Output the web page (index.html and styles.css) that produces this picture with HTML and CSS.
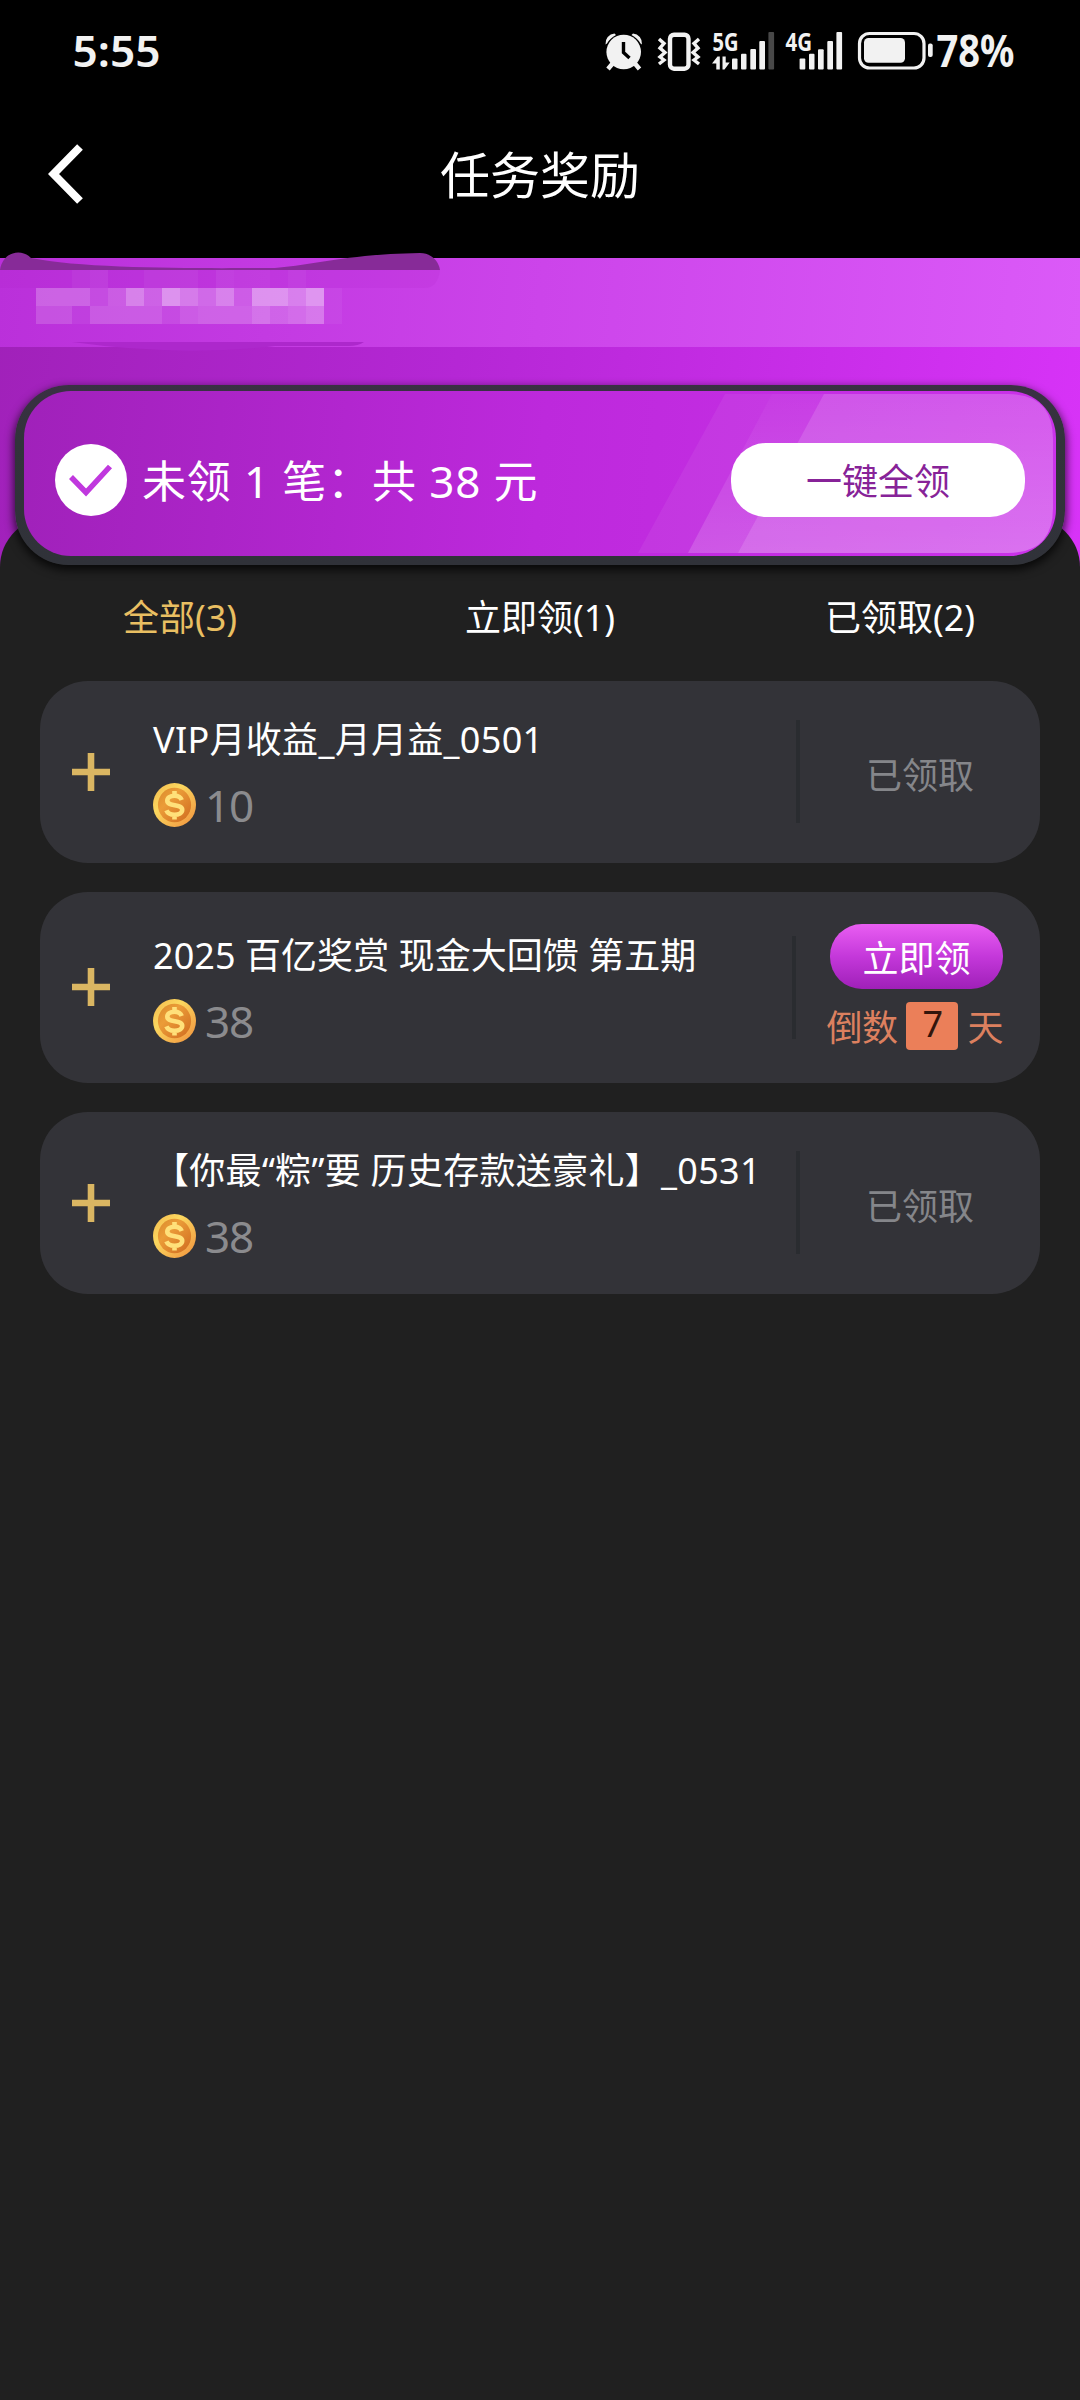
FILE: index.html
```html
<!DOCTYPE html>
<html lang="zh-CN">
<head>
<meta charset="utf-8">
<title>任务奖励</title>
<link rel="stylesheet" href="styles.css">
</head>
<body>
<svg class="defs" width="0" height="0" aria-hidden="true">
  <defs>
    <linearGradient id="rim" x1="0" y1="0" x2="1" y2="1"><stop offset="0" stop-color="#f3b64c"/><stop offset=".35" stop-color="#fbd85f"/><stop offset="1" stop-color="#f08f3c"/></linearGradient>
    <linearGradient id="face" x1="0" y1="0" x2="1" y2="1"><stop offset="0" stop-color="#d98a2b"/><stop offset=".35" stop-color="#eb9c38"/><stop offset="1" stop-color="#cf6a1f"/></linearGradient>
    <symbol id="coin" viewBox="0 0 43 44">
      <ellipse cx="21.5" cy="22" rx="21.5" ry="22" fill="url(#rim)"/>
      <ellipse cx="21.5" cy="22" rx="16.6" ry="17.2" fill="url(#face)"/>
      <path d="M21.5 8v5M21.5 31.500v5M28.700 17c-1-2.700-4-4.200-7.200-4.200-4.200 0-7.200 1.900-7.200 4.900 0 6.300 14.900 2.800 14.900 9.100 0 3.200-3.500 5-7.700 5-3.700 0-6.900-1.500-8.100-4.400" fill="none" stroke="#ffe07a" stroke-width="4.600"/>
    </symbol>
    <symbol id="plus" viewBox="0 0 38 38"><path d="M19 0v38M0 19h38" stroke="#dab662" stroke-width="6.600"/></symbol>
  </defs>
</svg>
<div class="screen">
  <header class="top">
    <div class="status">
      <svg width="1080" height="100" viewBox="0 0 1080 100">
        <g fill="#f2f2f2">
          <text class="sys" x="72.500" y="67" font-size="44" textLength="88" lengthAdjust="spacingAndGlyphs">5:55</text>
          <path d="M605.500 44.500a10 10 0 0 1 9-11l1.500 1.500q-6 3-9 8.500zM642 44.500a10 10 0 0 0-9-11l-1.500 1.500q6 3 9 8.500z"/>
          <circle cx="623.700" cy="52" r="17.300"/>
          <path d="M613 63l-5 6M634.500 63l5 6" stroke="#f2f2f2" stroke-width="4.500"/>
          <path d="M623.500 42v10.500l6 5.500" fill="none" stroke="#000" stroke-width="3.400"/>
          <rect x="670" y="34.700" width="18.500" height="34" rx="4" fill="none" stroke="#f2f2f2" stroke-width="4.400"/>
          <path d="M659 39l5 4.500-4 4.500 5 4.500-5 4.500 4 3-5 4M699 39l-5 4.500 4 4.500-5 4.500 5 4.500-4 3 5 4" fill="none" stroke="#f2f2f2" stroke-width="3.400"/>
          <text class="sys net" x="712.500" y="50.500" font-size="25" textLength="26" lengthAdjust="spacingAndGlyphs">5G</text>
          <path d="M712 63.500l5.500-7h2.300v13h-3.500v-6zM722.500 56.500h3.200v6h4l-5.200 7h-2z"/>
          <rect x="732" y="58.500" width="5.500" height="11" rx="1"/><rect x="741" y="53.700" width="5.500" height="15.800" rx="1"/><rect x="750.300" y="49" width="5.700" height="20.500" rx="1"/><rect x="759.300" y="41" width="5.700" height="28.500" rx="1"/><rect x="768.400" y="32" width="5.700" height="37.500" rx="1" fill="#484848"/>
          <text class="sys net" x="785.500" y="50.500" font-size="25" textLength="26.500" lengthAdjust="spacingAndGlyphs">4G</text>
          <rect x="799.600" y="58.500" width="5.700" height="11" rx="1"/><rect x="809" y="53.700" width="5.500" height="15.800" rx="1"/><rect x="818" y="49.300" width="5.700" height="20.200" rx="1"/><rect x="827.300" y="41" width="5.700" height="28.500" rx="1"/><rect x="836.400" y="32" width="5.700" height="37.500" rx="1"/>
          <rect x="859.500" y="33.500" width="64.500" height="34.500" rx="10" fill="none" stroke="#f2f2f2" stroke-width="3.200"/>
          <rect x="864" y="38" width="41" height="24.800" rx="4.500"/>
          <rect x="928" y="43.500" width="4.700" height="13.500" rx="2"/>
          <text class="sys net" x="936.500" y="67" font-size="44" textLength="78" lengthAdjust="spacingAndGlyphs">78%</text>
        </g>
      </svg>
    </div>
    <div class="nav">
      <svg class="back" width="36" height="60" viewBox="0 0 36 60"><path d="M32 3L5.500 30 32 57" fill="none" stroke="#fff" stroke-width="8"/></svg>
      <h1 class="title">任务奖励</h1>
    </div>
  </header>

  <section class="hero">
    <div class="ticker">
      <svg class="scribble" width="460" height="104" viewBox="0 250 460 104">
        <path d="M0 270C3 251 22 248 31 258C90 270 220 268 275 268C320 264 350 254 420 253C432 253 439 262 440 270z" fill="#872b98"/>
        <path d="M72 342H364Q358 346.500 346 346H275Q180 357 72 342z" fill="#ad28cc"/>
        <path d="M0 270H440Q438 288 424 288H0z" fill="#b020cc" opacity=".15"/>
        <g fill="#fff">
          <path d="M72 270h18v18H72zM144 270h54v18h-54zM234 270h36v18h-36zM288 270h18v18h-18z" opacity=".04"/>
          <path d="M90 270h18v18H90zM216 270h18v18h-18z" opacity=".06"/>
          <path d="M36 288h54v18H36z" opacity=".24"/><path d="M90 288h18v18H90z" opacity=".12"/><path d="M108 288h18v18h-18z" opacity=".2"/><path d="M126 288h18v18h-18z" opacity=".38"/><path d="M144 288h18v18h-18z" opacity=".22"/><path d="M162 288h18v18h-18z" opacity=".46"/><path d="M180 288h18v18h-18z" opacity=".34"/><path d="M198 288h18v18h-18z" opacity=".25"/><path d="M216 288h18v18h-18z" opacity=".37"/><path d="M234 288h18v18h-18z" opacity=".18"/><path d="M252 288h36v18h-36z" opacity=".45"/><path d="M288 288h18v18h-18z" opacity=".35"/><path d="M306 288h18v18h-18z" opacity=".46"/><path d="M324 288h18v36h-18z" opacity=".05"/>
          <path d="M36 306h36v18H36z" opacity=".16"/><path d="M72 306h18v18H72z" opacity=".06"/><path d="M90 306h72v18H90z" opacity=".19"/><path d="M162 306h18v18h-18z" opacity=".1"/><path d="M180 306h18v18h-18z" opacity=".18"/><path d="M198 306h54v18h-54z" opacity=".21"/><path d="M252 306h18v18h-18z" opacity=".29"/><path d="M270 306h18v18h-18z" opacity=".21"/><path d="M288 306h18v18h-18z" opacity=".25"/><path d="M306 306h18v18h-18z" opacity=".31"/>
        </g>
      </svg>
    </div>
    <div class="banner">
      <div class="banner-in">
        <svg class="rays" width="1032" height="165" viewBox="0 0 1032 165" fill="#fff">
          <path d="M701 3H984Q1029 3 1029 48V117Q1029 162 984 162H614z" opacity=".06"/>
          <path d="M748 3H984Q1029 3 1029 48V117Q1029 162 984 162H664z" fill="url(#r2)"/>
          <path d="M800 3H984Q1029 3 1029 48V117Q1029 162 984 162H714z" opacity=".13"/>
          <defs><linearGradient id="r2" x1="0" y1="0" x2="0" y2="1"><stop offset="0" stop-color="#fff" stop-opacity=".02"/><stop offset="1" stop-color="#fff" stop-opacity=".16"/></linearGradient></defs>
        </svg>
        <svg class="check" width="72" height="72" viewBox="0 0 72 72"><circle cx="36" cy="36" r="36" fill="#fff"/><path d="M16 33l15 15.500 24-26" fill="none" stroke="#c038de" stroke-width="5.500"/></svg>
        <span class="summary">未领 1 笔：共 38 元</span>
        <button class="claim-all">一键全领</button>
      </div>
    </div>
  </section>

  <main class="panel">
    <nav class="tabs">
      <span class="tab tab-on">全部(3)</span>
      <span class="tab">立即领(1)</span>
      <span class="tab">已领取(2)</span>
    </nav>
    <div class="list">
      <article class="card">
        <svg class="plus"><use href="#plus"/></svg>
        <div class="info">
          <div class="name">VIP月收益_月月益_0501</div>
          <div class="amount"><svg class="coin"><use href="#coin"/></svg>10</div>
        </div>
        <div class="rule"></div>
        <div class="state">已领取</div>
      </article>
      <article class="card card-open">
        <svg class="plus"><use href="#plus"/></svg>
        <div class="info">
          <div class="name">2025 百亿奖赏 现金大回馈 第五期</div>
          <div class="amount"><svg class="coin"><use href="#coin"/></svg>38</div>
        </div>
        <div class="rule"></div>
        <div class="state">
          <button class="claim">立即领</button>
          <div class="count"><span>倒数</span><b class="days">7</b><span>天</span></div>
        </div>
      </article>
      <article class="card">
        <svg class="plus"><use href="#plus"/></svg>
        <div class="info">
          <div class="name">【你最“粽”要 历史存款送豪礼】_0531</div>
          <div class="amount"><svg class="coin"><use href="#coin"/></svg>38</div>
        </div>
        <div class="rule"></div>
        <div class="state">已领取</div>
      </article>
    </div>
  </main>
</div>
</body>
</html>
```
FILE: styles.css
```css
* { box-sizing: border-box; }
body {
  margin: 0;
  background: #202020;
  color: #fff;
  font-family: "Noto Sans", "Noto Sans CJK SC", sans-serif;
  font-size: 36px;
}
.defs { display: block; position: absolute; }
svg { display: block; flex: none; }
button { border: 0; padding: 0; font: inherit; }
.screen { width: 1080px; height: 2400px; display: flex; flex-direction: column; overflow: hidden; }

.top { height: 258px; background: #000; flex: none; }
.status { height: 100px; }
.sys { font-family: "Noto Sans", sans-serif; font-weight: 600; }
.net { font-weight: 700; }
.nav {
  height: 147px;
  padding: 0 48px;
  display: grid;
  grid-template-columns: 36px 1fr 36px;
  align-items: center;
}
.title { margin: 0; text-align: center; font-size: 50px; font-weight: 400; line-height: 60px; padding-top: 3px; }

.hero {
  flex: none;
  height: 309px;
  background: linear-gradient(98deg, #a021b9, #b527d5 42%, #d833f8);
}
.ticker { height: 88.500px; background: linear-gradient(95deg, #ba30da, #cc44ea 50%, #db5af8); position: relative; }
.scribble { position: absolute; left: 0; top: -8px; }
.banner {
  position: relative;
  z-index: 2;
  width: 1050px;
  height: 180px;
  margin: 38px 0 0 15px;
  padding: 6.500px 9px 8.500px;
  border-radius: 54px;
  background: linear-gradient(#3a3044, #32333b 30%, #303239);
  box-shadow: 0 4px 10px 1px rgba(0, 0, 0, .75);
}
.banner-in {
  position: relative;
  height: 165px;
  border-radius: 47px;
  overflow: hidden;
  padding: 0 31px;
  display: flex;
  align-items: center;
  background: linear-gradient(95deg, #a021ba, #bd29dc 50%, #cb32ea);
}
.rays { position: absolute; left: 0; top: 0; }
.check { position: relative; margin-top: 12px; }
.summary { position: relative; margin: 14px auto 0 15px; font-size: 44px; line-height: 60px; letter-spacing: .85px; white-space: pre; }
.claim-all {
  position: relative;
  width: 294px;
  height: 74px;
  margin-top: 12px;
  border-radius: 35px;
  background: #fff;
  color: #872398;
}

.panel { flex: 1; margin-top: -50px; padding-top: 74px; border-radius: 50px 50px 0 0; background: #202020; }
.tabs { display: grid; grid-template-columns: repeat(3, 1fr); text-align: center; line-height: 54px; }
.tab-on { color: #e9bf62; }
.list { display: flex; flex-direction: column; gap: 29px; margin-top: 35.500px; padding: 0 40px; }
.card {
  height: 182.500px;
  padding-left: 31.500px;
  display: flex;
  align-items: center;
  border-radius: 48px;
  background: #333338;
}
.card-open { height: 190.500px; }
.plus { width: 38px; height: 38px; }
.info { flex: 1; margin-left: 43.500px; white-space: nowrap; }
.name { line-height: 48px; letter-spacing: .3px; }
.card-open .name { letter-spacing: .05px; }
.amount {
  display: flex;
  align-items: center;
  gap: 9px;
  margin-top: 19px;
  line-height: 44px;
  font-size: 44px;
  letter-spacing: -1.200px;
  color: #8b8b8e;
}
.coin { width: 43px; height: 44px; }
.rule { width: 4px; height: 103px; background: #2a2c30; }
.state { width: 240px; padding-top: 4px; text-align: center; color: #85868a; }
.card-open .state { width: 244px; padding: 1px 37px 0 0; display: flex; flex-direction: column; align-items: flex-end; gap: 12px; }
.claim {
  width: 173px;
  height: 65px;
  border-radius: 32px;
  background: linear-gradient(#e95ef2, #c438da 50%, #9f20b8);
  color: #fff;
}
.count { display: flex; align-items: center; gap: 9px; color: #dc805f; line-height: 48px; letter-spacing: -.5px; }
.count span { padding-top: 3px; }
.days { width: 52px; height: 48px; border-radius: 4px; background: #eb7f59; color: #33150c; font-weight: 400; line-height: 44px; }
```
